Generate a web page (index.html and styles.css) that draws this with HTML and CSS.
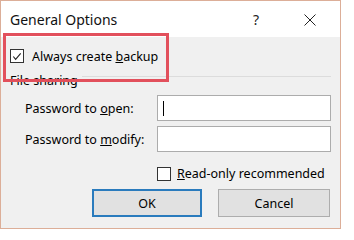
FILE: index.html
```html
<!DOCTYPE html>
<html>
<head>
  <title>General Options</title>
  <link rel="stylesheet" href="styles.css">
</head>
<body>
  <div class="dialog">
    <div class="titlebar">
      <span class="title">General Options</span>
      <span class="help">?</span>
      <span class="close">
        <svg width="12" height="12" viewBox="0 0 12 12"><path d="M0.5 0.5 L11.5 11.5 M11.5 0.5 L0.5 11.5" stroke="#222" stroke-width="1" fill="none"/></svg>
      </span>
    </div>
    <div class="content">
      <div class="check-row">
        <span class="checkbox">
          <svg width="13" height="13" viewBox="0 0 13 13"><polyline points="2.5,6.5 5,9.5 10.5,3" stroke="#222" stroke-width="1.2" fill="none"/></svg>
        </span>
        <span>Always create <u>b</u>ackup</span>
      </div>
      <div class="highlight"></div>
      <div class="group-title">
        <span>File sharing</span>
        <span class="group-line"></span>
      </div>
      <div class="field-row">
        <label>Password to <u>o</u>pen:</label>
        <div class="input"><span class="caret"></span></div>
      </div>
      <div class="field-row">
        <label>Password to <u>m</u>odify:</label>
        <div class="input"></div>
      </div>
      <div class="readonly-row">
        <span class="checkbox"></span>
        <span><u>R</u>ead-only recommended</span>
      </div>
      <div class="buttons">
        <button class="btn default">OK</button>
        <button class="btn">Cancel</button>
      </div>
    </div>
  </div>
</body>
</html>
```
FILE: styles.css
```css
body {
  margin: 0;
  background: #fff;
  font-family: "Noto Sans", sans-serif;
  font-size: 12.5px;
  color: #000;
}

.dialog {
  position: relative;
  width: 339px;
  height: 227px;
  border: 1px solid #dcae98;
  background: #f0f0f0;
}

.titlebar {
  height: 36px;
  background: #fff;
  display: flex;
  align-items: center;
  padding-left: 9px;
}

.title {
  font-size: 14px;
  color: #111;
  flex: 1;
}

.help {
  font-size: 14px;
  color: #222;
  width: 51px;
}

.close {
  width: 36px;
  display: flex;
  padding-top: 1px;
}

.content {
  padding: 0 9px 0 9px;
}

.check-row {
  display: flex;
  align-items: center;
  margin-top: 12px;
  height: 14px;
}

.checkbox {
  width: 12px;
  height: 12px;
  border: 1px solid #333;
  background: #fff;
  margin-right: 8px;
  display: flex;
}

.highlight {
  position: absolute;
  left: 2px;
  top: 32px;
  width: 160px;
  height: 43px;
  border: 3px solid #e2505c;
}

.group-title {
  display: flex;
  margin-top: 9px;
  height: 16px;
}

.group-line {
  flex: 1;
  height: 1px;
  background: #dcdcdc;
  margin-left: 4px;
  margin-top: 4px;
}

.field-row {
  display: flex;
  align-items: center;
  padding-left: 15px;
  margin-top: 7px;
}

.field-row + .field-row {
  margin-top: 5px;
}

.field-row label {
  width: 132px;
}

.input {
  width: 172px;
  height: 24px;
  border: 1px solid #acacac;
  background: #fff;
  display: flex;
  align-items: center;
}

.caret {
  width: 1px;
  height: 15px;
  background: #000;
  margin-left: 5px;
}

.readonly-row {
  display: flex;
  align-items: center;
  margin-top: 13px;
  padding-left: 147px;
}

.readonly-row .checkbox {
  margin-right: 6px;
}

.buttons {
  display: flex;
  margin-top: 7px;
  padding-left: 82px;
  gap: 16px;
}

.btn {
  width: 112px;
  height: 28px;
  border: 1px solid #adadad;
  background: #e1e1e1;
  font-family: "Noto Sans", sans-serif;
  font-size: 12.5px;
  color: #000;
  padding: 0;
}

.btn.default {
  width: 110px;
  border: 2px solid #2a7bbd;
}
```
